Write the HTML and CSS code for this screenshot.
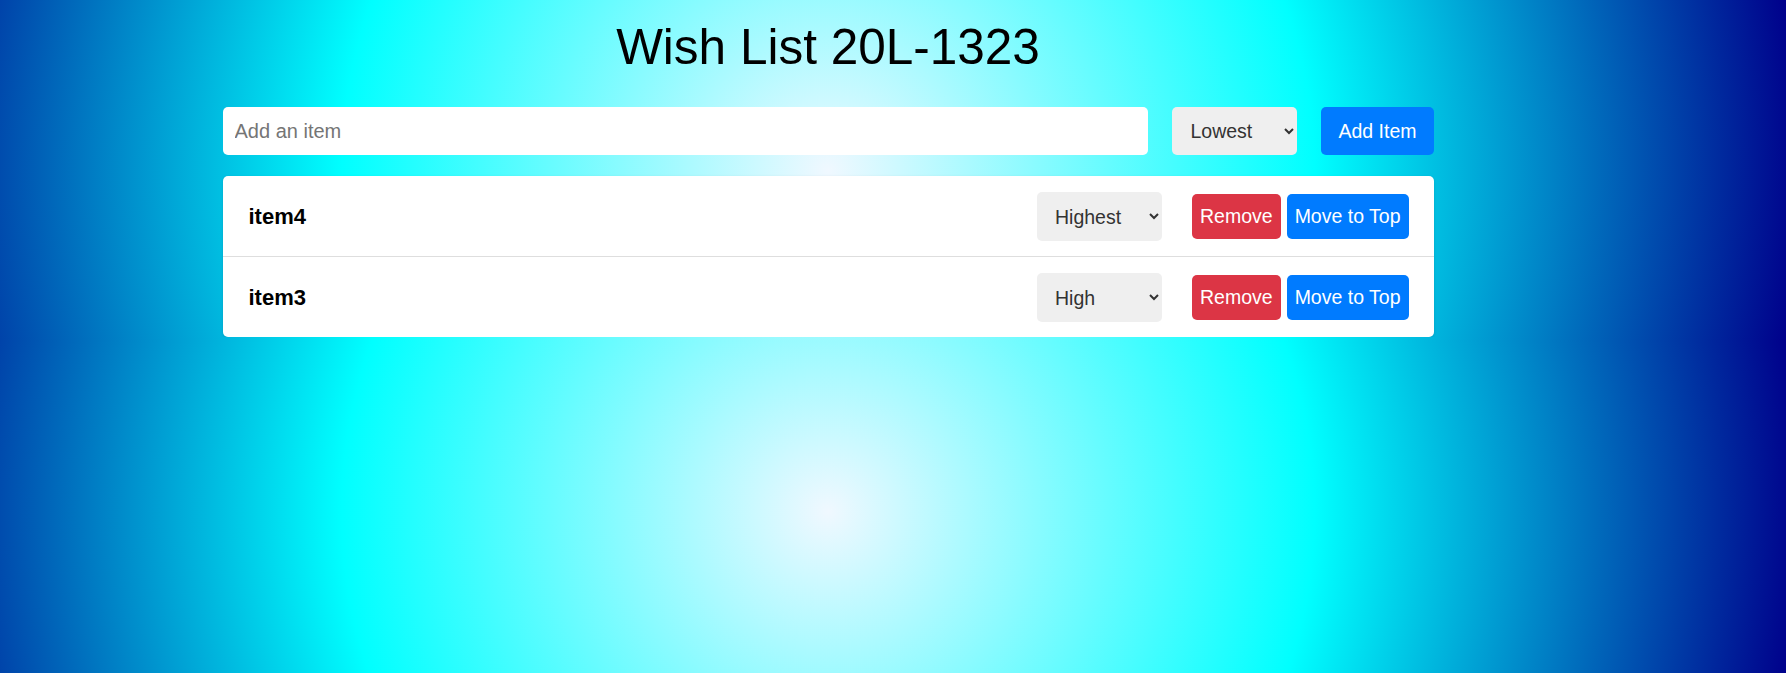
FILE: index.html
```html
<!DOCTYPE html>
<html lang="en">
<head>
<meta charset="utf-8">
<title>Wish List</title>
<link rel="stylesheet" href="styles.css">
</head>
<body>
<div class="page">
  <h1 class="title">Wish List 20L-1323</h1>
  <div class="app">
    <form class="add-row" onsubmit="return false">
      <input class="add-input" type="text" placeholder="Add an item">
      <select class="priority">
        <option selected>Lowest</option>
        <option>Low</option>
        <option>Medium</option>
        <option>High</option>
        <option>Highest</option>
      </select>
      <button class="btn btn-primary btn-add" type="button">Add Item</button>
    </form>
    <ul class="list">
      <li class="item">
        <span class="item-name">item4</span>
        <select class="priority">
          <option>Lowest</option>
          <option>Low</option>
          <option>Medium</option>
          <option>High</option>
          <option selected>Highest</option>
        </select>
        <div class="actions">
          <button class="btn btn-danger" type="button">Remove</button>
          <button class="btn btn-primary" type="button">Move to Top</button>
        </div>
      </li>
      <li class="item">
        <span class="item-name">item3</span>
        <select class="priority">
          <option>Lowest</option>
          <option>Low</option>
          <option>Medium</option>
          <option selected>High</option>
          <option>Highest</option>
        </select>
        <div class="actions">
          <button class="btn btn-danger" type="button">Remove</button>
          <button class="btn btn-primary" type="button">Move to Top</button>
        </div>
      </li>
    </ul>
  </div>
</div>
</body>
</html>
```

FILE: styles.css
```css
html {
  background-color: darkblue;
  background-image: radial-gradient(circle 973px at 828px 170.5px, #f0f8ff 0%, #00ffff 50%, #00008b 100%);
  background-size: 100% 341px;
  background-repeat: repeat-y;
  min-height: 100%;
}

body {
  margin: 0;
  font-family: "Liberation Sans", Arial, sans-serif;
  color: #000;
}

.page {
  width: 1656px;
  padding-top: 19px;
}

.title {
  margin: 0 0 33px;
  font-size: 49.5px;
  font-weight: normal;
  text-align: center;
  line-height: 55px;
}

.app {
  width: 1211px;
  margin: 0 auto;
}

.add-row {
  display: flex;
  align-items: center;
  gap: 24px;
  margin: 0 0 21px;
}

.add-input {
  flex: 1;
  box-sizing: border-box;
  height: 48px;
  border: none;
  border-radius: 5px;
  padding: 0 12px;
  background: #fff;
  font-family: inherit;
  font-size: 20px;
  color: #000;
  outline: none;
}

.add-input::placeholder {
  color: #757575;
}

.priority {
  box-sizing: border-box;
  width: 125px;
  height: 49px;
  border: none;
  border-radius: 5px;
  padding: 0 8px 0 14px;
  background-color: #efefef;
  color: #333;
  font-family: inherit;
  font-size: 19.5px;
}

.add-row .priority {
  height: 48px;
}

.btn {
  box-sizing: border-box;
  border: none;
  border-radius: 5px;
  padding: 0 8px;
  height: 45px;
  color: #fff;
  font-family: inherit;
  font-size: 19.5px;
  cursor: pointer;
}

.btn-add {
  height: 48px;
  padding: 0 17px;
}

.btn-primary {
  background: #007bff;
}

.btn-danger {
  background: #dc3545;
}

.list {
  list-style: none;
  margin: 0;
  padding: 0;
  background: #fff;
  border-radius: 5px;
  box-shadow: 0 1px 3px rgba(0, 0, 0, 0.12);
}

.item {
  display: flex;
  align-items: center;
  padding: 16px 25px 15px 26px;
  border-bottom: 1px solid #dedede;
}

.item:last-child {
  border-bottom: none;
}

.item-name {
  flex: 1;
  font-size: 22px;
  font-weight: bold;
}

.actions {
  display: flex;
  gap: 6px;
  margin-left: 30px;
}
```
